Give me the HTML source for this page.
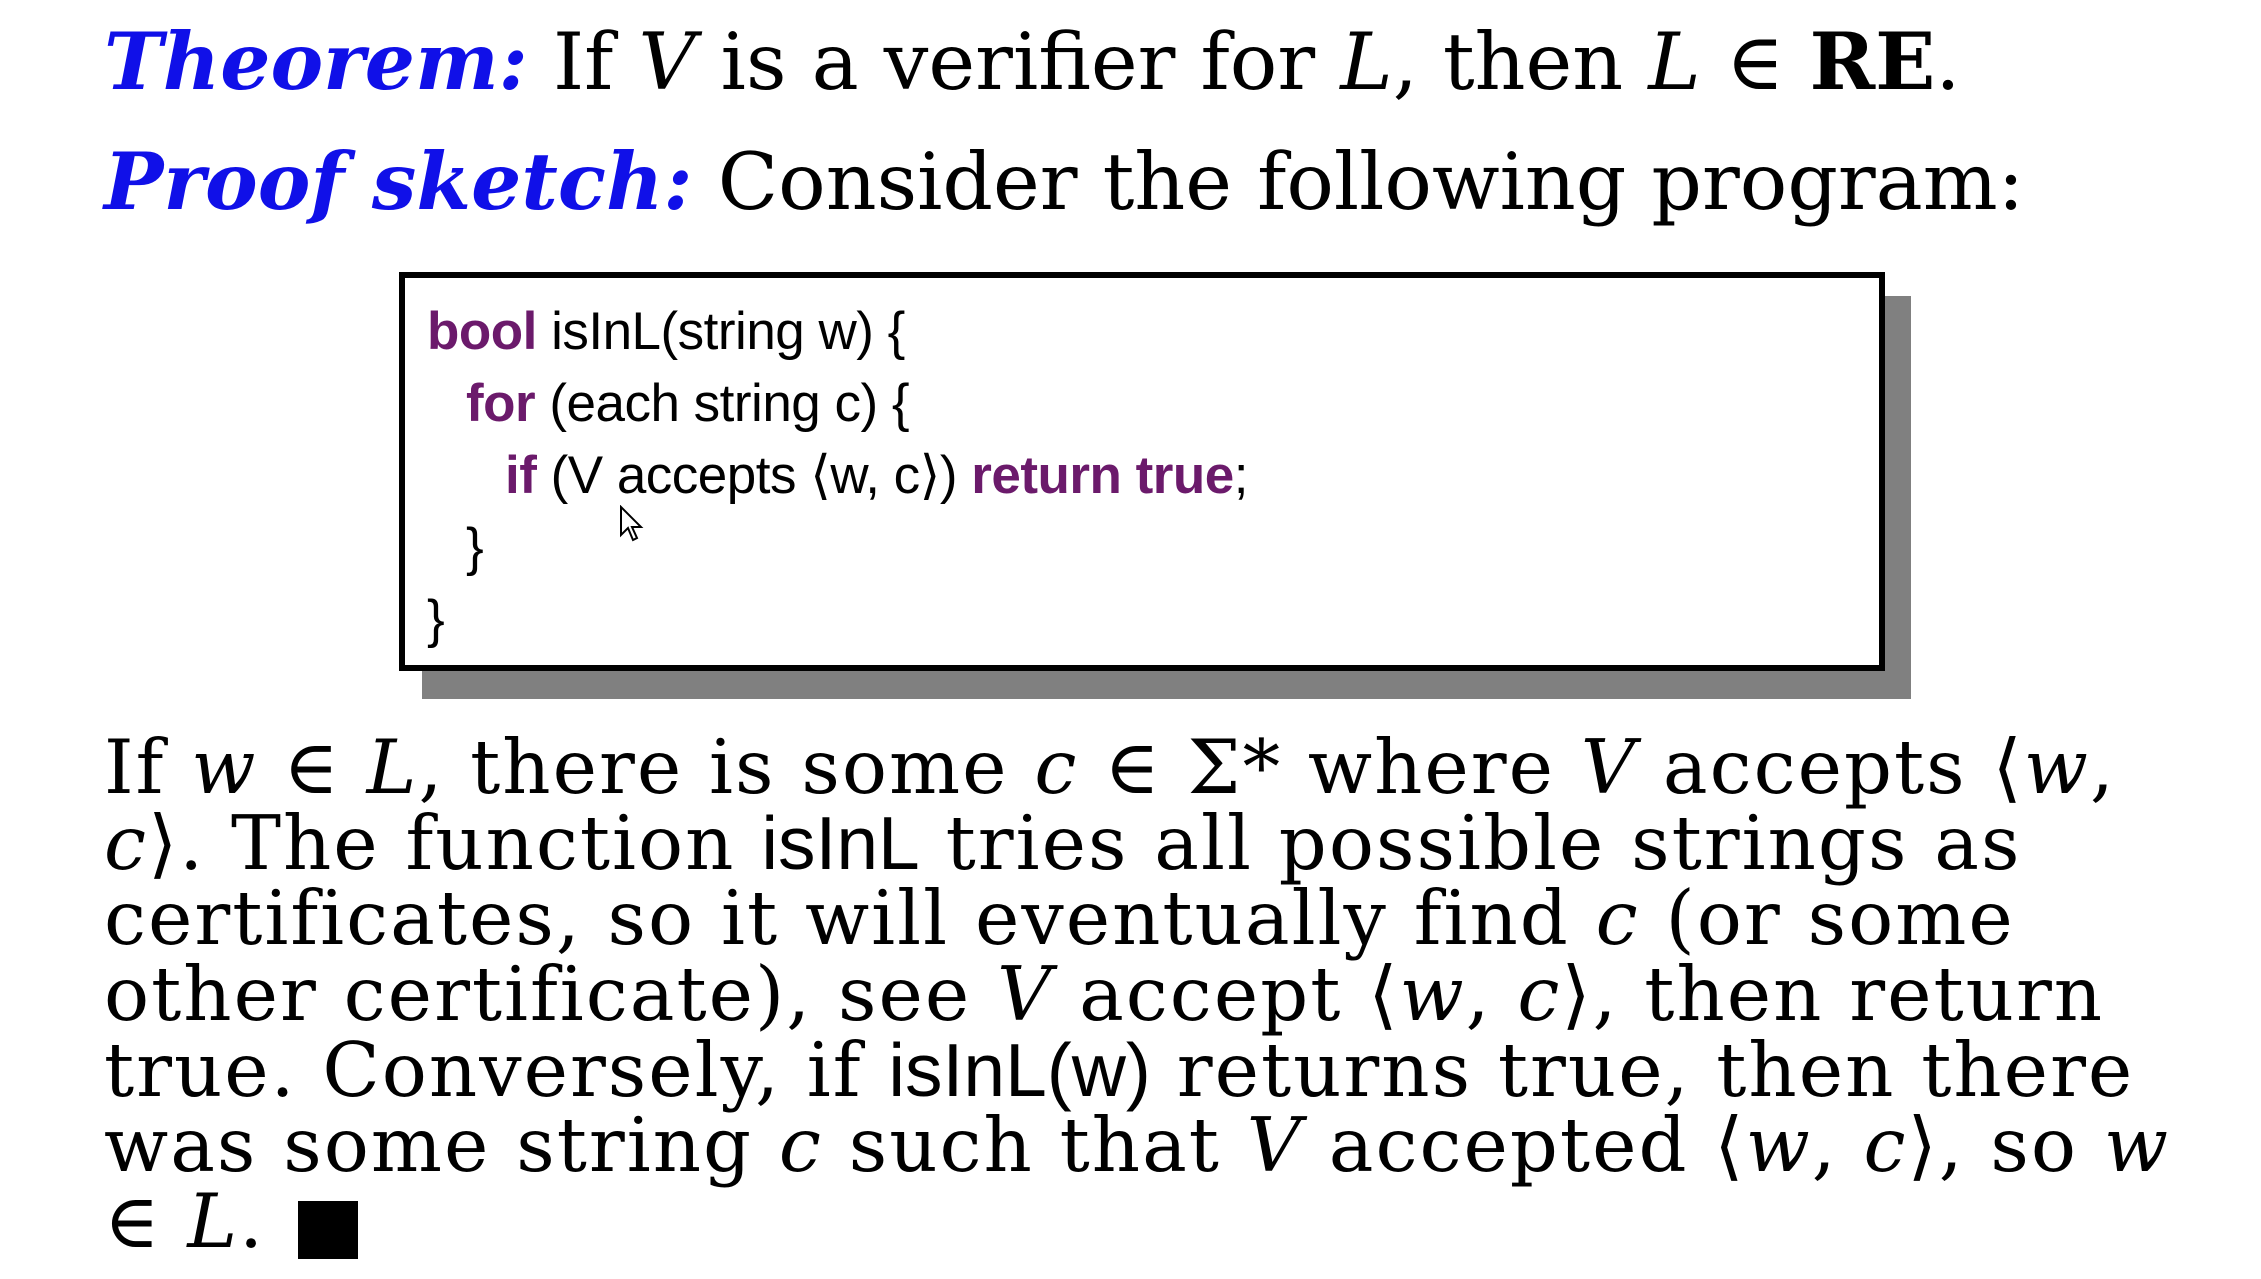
<!DOCTYPE html>
<html><head><meta charset="utf-8"><style>
body{margin:0;width:2261px;height:1279px;background:#fff;position:relative;overflow:hidden;font-family:"DejaVu Serif",serif;color:#000}
.l{position:absolute;left:104px;white-space:nowrap;line-height:1}
.h{font-size:79px}
.b{color:#1010e8;font-weight:bold;font-style:italic}
.p{font-size:75px;letter-spacing:2px}
i{font-style:italic}
.s{font-family:"Liberation Sans",sans-serif;letter-spacing:0}
.c{position:absolute;white-space:nowrap;line-height:1;font-family:"Liberation Sans",sans-serif;font-size:53px;letter-spacing:-0.5px}
.k{color:#6b1a6b;font-weight:bold}
#shadow{position:absolute;left:422px;top:296px;width:1489px;height:403px;background:#808080}
#box{position:absolute;left:399px;top:272px;width:1474px;height:387px;border:6px solid #000;background:#fff}
</style></head><body>
<div class="l h" style="top:22px"><span class="b">Theorem:</span> If <i>V</i> is a verifier for <i>L</i>, then <i>L</i> ∈ <b>RE</b>.</div>
<div class="l h" style="top:142px"><span class="b">Proof sketch:</span> Consider the following program:</div>
<div id="shadow"></div><div id="box"></div>
<div class="c" style="left:427px;top:305px"><span class="k">bool</span> isInL(string w) {</div>
<div class="c" style="left:466px;top:377px"><span class="k">for</span> (each string c) {</div>
<div class="c" style="left:505px;top:449px"><span class="k">if</span> (V accepts ⟨w, c⟩) <span class="k">return true</span>;</div>
<div class="c" style="left:466px;top:521px">}</div>
<div class="c" style="left:427px;top:593px">}</div>
<svg style="position:absolute;left:619px;top:505px" width="26" height="38" viewBox="0 0 26 38"><path d="M2 2 L2 30 L9 23 L14 35 L18 33 L13 22 L22 22 Z" fill="#fff" stroke="#000" stroke-width="2"/></svg>
<div class="l p" style="top:730px">If <i>w</i> ∈ <i>L</i>, there is some <i>c</i> ∈ Σ* where <i>V</i> accepts ⟨<i>w</i>,</div>
<div class="l p" style="top:806px"><i>c</i>⟩. The function <span class="s">isInL</span> tries all possible strings as</div>
<div class="l p" style="top:881px">certificates, so it will eventually find <i>c</i> (or some</div>
<div class="l p" style="top:957px">other certificate), see <i>V</i> accept ⟨<i>w</i>, <i>c</i>⟩, then return</div>
<div class="l p" style="top:1033px">true. Conversely, if <span class="s">isInL(w)</span> returns true, then there</div>
<div class="l p" style="top:1108px">was some string <i>c</i> such that <i>V</i> accepted ⟨<i>w</i>, <i>c</i>⟩, so <i>w</i></div>
<div class="l p" style="top:1184px">∈ <i>L</i>.</div>
<div style="position:absolute;left:298px;top:1201px;width:60px;height:58px;background:#000"></div>
</body></html>
